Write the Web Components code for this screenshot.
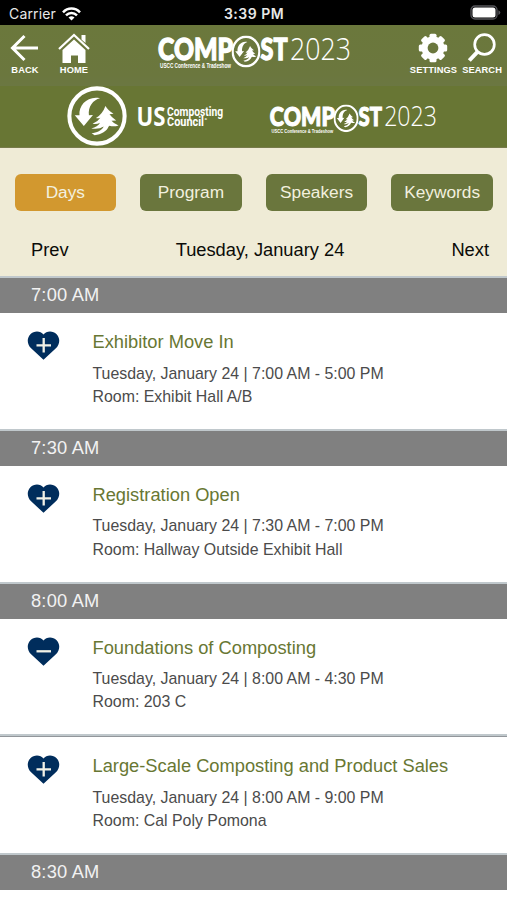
<!DOCTYPE html>
<html lang="en">
<head>
<meta charset="utf-8">
<meta name="viewport" content="width=device-width, initial-scale=1">
<title>Compost 2023</title>
<style>
  body {
    margin: 0;
    background: #fff;
    font-family: "Liberation Sans", Arial, sans-serif;
  }
</style>
</head>
<body>
<schedule-app></schedule-app>

<script>
class StatusBar extends HTMLElement {
  constructor() {
    super();
    this.attachShadow({ mode: 'open' });
  }

  connectedCallback() {
    this.shadowRoot.innerHTML = `
      <style>
        :host {
          display: grid;
          grid-template-columns: 1fr auto 1fr;
          align-items: center;
          height: 25px;
          padding: 0 6px 0 9px;
          box-sizing: border-box;
          background: #000;
          color: #e8e8e8;
          font-family: Inter, sans-serif;
          font-size: 14px;
        }

        .carrier { display: flex; align-items: center; gap: 6px; padding-top: 2px; letter-spacing: 0.15px; }
        .time { font-weight: 600; font-size: 14px; padding-top: 2px; margin-left: -2px; letter-spacing: 0.5px; }
        .battery { justify-self: end; }
        svg { display: block; }
      </style>
      <div class="carrier">
        <span>Carrier</span>
        <svg width="19" height="14" viewBox="0 0 19 14" fill="none" stroke="#fff" stroke-width="2.5">
          <path d="M1 5.4C5.8 .3 13.2 .3 18 5.4M4 8.4C7.2 5.2 11.8 5.2 15 8.4"/>
          <path d="M6.5 10.5Q9.5 8 12.5 10.5L9.5 13.5Z" fill="#fff" stroke="none"/>
        </svg>
      </div>
      <span class="time">3:39 PM</span>
      <svg class="battery" width="31" height="16" viewBox="0 0 31 16">
        <rect x="1" y="1" width="26" height="13" rx="4" fill="none" stroke="#55555a" stroke-width="1.3"/>
        <rect x="2.5" y="2.5" width="23" height="10" rx="2.5" fill="#fff"/>
        <path d="M28.4 5.2Q30.3 6 30.3 7.6T28.4 10Z" fill="#55555a"/>
      </svg>
    `;
  }
}

// Ring with the curved arrow and the pine tree, stretched to fill its box
const emblem = (attrs, ring = 12) => `
  <svg ${attrs} viewBox="0 0 178 178" preserveAspectRatio="none">
    <circle cx="89" cy="89" r="82" fill="none" stroke="#fff" stroke-width="${ring}"/>
    <path fill="#fff" d="M37 87C34 56 62 28 98 36C77 41 62 61 65 87L77 86L50 119L23 87Z"/>
    <path fill="#fff" d="M114 59C120 69 127 75 138 82L126 84Q133 94 146 102L132 103Q139 112 153 117Q139 122 126 118L123 121C119 133 102 144 82 146L73 140C88 139 103 132 109 120Q94 130 72 126Q91 121 98 109Q89 114 76 112Q92 105 99 94Q93 97 86 95Q106 82 114 59Z"/>
  </svg>`;

class CompostLogo extends HTMLElement {
  constructor() {
    super();
    this.attachShadow({ mode: 'open' });
  }

  connectedCallback() {
    this.shadowRoot.innerHTML = `
      <style>
        :host { display: block; width: 194px; }
        .logo { display: block; width: 100%; overflow: visible; }
        text { fill: #fff; font-family: "Open Sans", sans-serif; }
        .bold { font-family: Lato, sans-serif; font-size: 30.5px; font-weight: 900; stroke: #fff; stroke-width: 1.3px; }
        .light { font-size: 31px; font-weight: 300; }
        .tagline { font-family: "Liberation Sans", sans-serif; font-size: 7px; font-weight: 700; }
      </style>
      <svg class="logo" viewBox="0 0 194 36">
        <text class="bold" x="1" y="25" textLength="75" lengthAdjust="spacingAndGlyphs">COMP</text>
        ${emblem('x="74.5" y="0.5" width="29" height="32"', 14)}
        <text class="bold" x="103.5" y="25" textLength="27" lengthAdjust="spacingAndGlyphs">ST</text>
        <text class="light" x="133" y="25" textLength="61" lengthAdjust="spacingAndGlyphs">2023</text>
        <text class="tagline" x="3" y="33.2" textLength="71" lengthAdjust="spacingAndGlyphs">USCC Conference &amp; Tradeshow</text>
      </svg>
    `;
  }
}

class CouncilLogo extends HTMLElement {
  constructor() {
    super();
    this.attachShadow({ mode: 'open' });
  }

  connectedCallback() {
    this.shadowRoot.innerHTML = `
      <style>
        :host { display: block; }
        .logo { display: block; overflow: visible; }
        text { fill: #fff; font-family: "Open Sans", sans-serif; font-weight: 700; }
        .small { font-family: Roboto, sans-serif; font-size: 12px; }
      </style>
      <svg class="logo" width="158" height="60" viewBox="0 0 158 60">
        ${emblem('x="0" y="0" width="60" height="60"')}
        <text x="69.5" y="39.5" font-size="26" textLength="29" lengthAdjust="spacingAndGlyphs">US</text>
        <text class="small" x="100" y="30.4" textLength="56" lengthAdjust="spacingAndGlyphs">Composting</text>
        <text class="small" x="100" y="39.8" textLength="37" lengthAdjust="spacingAndGlyphs">Council</text>
        <text x="137.5" y="36" font-size="6">°</text>
      </svg>
    `;
  }
}

const navIcons = {
  back: '<path d="M14.5 3L2.5 15L14.5 27M3 15H28" fill="none" stroke="#fff" stroke-width="3"/>',
  home: `
    <path d="M16 6.5L27.5 17V30H20V22.5H13V30H4.5V17Z" fill="#fff"/>
    <path d="M1 16L16 2L31 16" fill="none" stroke="#fff" stroke-width="2.2"/>
    <path d="M23.5 2H27.5V10L23.5 6.5Z" fill="#fff"/>`,
  settings: `
    <g fill="#fff">
      <circle cx="15" cy="15" r="11.5"/>
      <rect x="11.5" y=".8" width="7" height="28.4" rx="1.5"/>
      <rect x="11.5" y=".8" width="7" height="28.4" rx="1.5" transform="rotate(45 15 15)"/>
      <rect x="11.5" y=".8" width="7" height="28.4" rx="1.5" transform="rotate(90 15 15)"/>
      <rect x="11.5" y=".8" width="7" height="28.4" rx="1.5" transform="rotate(135 15 15)"/>
    </g>
    <circle cx="15" cy="15" r="5.4" fill="#6b773e"/>`,
  search: `
    <circle cx="17.5" cy="11.5" r="9.8" fill="none" stroke="#fff" stroke-width="2.7"/>
    <path d="M10.5 18.8L2.3 27.5" stroke="#fff" stroke-width="4"/>`
};

class NavButton extends HTMLElement {
  constructor() {
    super();
    this.attachShadow({ mode: 'open' });
  }

  connectedCallback() {
    const icon = this.getAttribute('icon');
    const width = icon === 'home' ? 32 : 30;

    this.shadowRoot.innerHTML = `
      <style>
        :host { display: block; }

        button {
          display: flex;
          flex-direction: column;
          align-items: center;
          width: 100%;
          padding: 0;
          border: none;
          background: none;
          color: #fff;
          font: bold 9.3px/11px "Liberation Sans", sans-serif;
          letter-spacing: 0.1px;
          white-space: nowrap;
          cursor: pointer;
        }

        svg { display: block; margin-bottom: 2px; }
      </style>
      <button>
        <svg width="${width}" height="30" viewBox="0 0 ${width} 30">${navIcons[icon]}</svg>
        <slot></slot>
      </button>
    `;
  }
}

class AppHeader extends HTMLElement {
  constructor() {
    super();
    this.attachShadow({ mode: 'open' });
  }

  connectedCallback() {
    this.shadowRoot.innerHTML = `
      <style>
        :host { display: block; }

        .toolbar {
          display: grid;
          grid-template-columns: 1fr auto 1fr;
          height: 61px;
          box-sizing: border-box;
          padding: 8px 5px 0 10px;
          background: linear-gradient(#6b783c 0, #6b773e 50px, #6b7742);
        }

        .group { display: flex; align-items: flex-start; }
        .left { gap: 18px; }
        .right { justify-content: flex-end; gap: 5px; }
        .toolbar compost-logo { padding-top: 2px; margin: 0 2px 0 -2px; }

        .banner {
          display: flex;
          height: 62px;
          box-sizing: border-box;
          padding: 0 0 0 67px;
          border-bottom: 1px solid #777b4b;
          background: #687634;
        }

        .banner council-logo { margin-right: 44px; }
        .banner compost-logo { width: 168px; padding-top: 18px; }
      </style>
      <div class="toolbar">
        <div class="group left">
          <nav-button icon="back">BACK</nav-button>
          <nav-button icon="home">HOME</nav-button>
        </div>
        <compost-logo></compost-logo>
        <div class="group right">
          <nav-button icon="settings">SETTINGS</nav-button>
          <nav-button icon="search">SEARCH</nav-button>
        </div>
      </div>
      <div class="banner">
        <council-logo></council-logo>
        <compost-logo></compost-logo>
      </div>
    `;
  }
}

class FilterButton extends HTMLElement {
  constructor() {
    super();
    this.attachShadow({ mode: 'open' });
  }

  connectedCallback() {
    this.shadowRoot.innerHTML = `
      <style>
        :host { display: block; flex: 1; }

        button {
          width: 100%;
          height: 37px;
          padding: 0 0 1px;
          border: none;
          border-radius: 6px;
          background: #6a763d;
          color: #f2f0df;
          font: 17.3px "Liberation Sans", sans-serif;
          cursor: pointer;
        }

        :host([active]) button { background: #d2982f; }
      </style>
      <button><slot></slot></button>
    `;
  }
}

class DayPicker extends HTMLElement {
  constructor() {
    super();
    this.attachShadow({ mode: 'open' });
  }

  connectedCallback() {
    this.shadowRoot.innerHTML = `
      <style>
        :host {
          display: block;
          height: 130px;
          box-sizing: border-box;
          padding-top: 26px;
          border-bottom: 2px solid #c0c8cc;
          background: #efebd6;
        }

        .filters { display: flex; gap: 24px; padding: 0 14px 0 14.5px; }

        .days {
          display: flex;
          justify-content: space-between;
          padding: 28px 18px 0 31px;
          font-size: 18.3px;
          line-height: 21px;
          color: #0b0b08;
        }
      </style>
      <div class="filters">
        <filter-button active>Days</filter-button>
        <filter-button>Program</filter-button>
        <filter-button>Speakers</filter-button>
        <filter-button>Keywords</filter-button>
      </div>
      <div class="days">
        <span>Prev</span>
        <span>Tuesday, January 24</span>
        <span>Next</span>
      </div>
    `;
  }
}

class TimeHeading extends HTMLElement {
  constructor() {
    super();
    this.attachShadow({ mode: 'open' });
  }

  connectedCallback() {
    this.shadowRoot.innerHTML = `
      <style>
        :host {
          display: block;
          height: 35.4px;
          box-sizing: border-box;
          padding-left: 31px;
          background: #808080;
          color: #f2f2f2;
          font-size: 18.3px;
          letter-spacing: 0.2px;
          line-height: 34px;
        }
      </style>
      <slot></slot>
    `;
  }
}

class SessionRow extends HTMLElement {
  constructor() {
    super();
    this.attachShadow({ mode: 'open' });
  }

  connectedCallback() {
    const saved = this.hasAttribute('saved');

    this.shadowRoot.innerHTML = `
      <style>
        :host {
          display: flex;
          height: 117.4px;
          box-sizing: border-box;
          padding: 18px 0 0 27px;
          border-bottom: 2px solid #c0c8cc;
          background: #fff;
        }

        :host([joined]) { height: 118.4px; border-top: 1px solid #92969b; }

        svg { flex: none; margin-right: 32.5px; }
        .title { margin-top: -0.4px; font-size: 18.3px; line-height: 21px; color: #687733; }
        .details { margin-top: 9.6px; font-size: 15.9px; line-height: 23.3px; color: #4b4b4b; }
      </style>
      <svg width="33" height="30" viewBox="0 0 33 30">
        <path fill="#002d5c" d="M16.5 3.6C19.5-.6 26-.6 29.6 3.2C33.6 7.5 32.8 13.5 28.9 17.3L16.5 28.8L4.1 17.3C.2 13.5-.6 7.5 3.4 3.2C7-.6 13.5-.6 16.5 3.6Z"/>
        <path stroke="#f1f1e6" stroke-width="2.3" d="M9.5 14.3H24${saved ? '' : 'M16.7 7.1V21.6'}"/>
      </svg>
      <div>
        <div class="title"><slot name="title"></slot></div>
        <div class="details">
          <div><slot name="when"></slot></div>
          <div><slot name="room"></slot></div>
        </div>
      </div>
    `;
  }
}

class ScheduleApp extends HTMLElement {
  constructor() {
    super();
    this.attachShadow({ mode: 'open' });
  }

  connectedCallback() {
    this.shadowRoot.innerHTML = `
      <style>
        :host { display: block; height: 900px; overflow: hidden; background: #fff; }
      </style>
      <status-bar></status-bar>
      <app-header></app-header>
      <day-picker></day-picker>
      <time-heading>7:00 AM</time-heading>
      <session-row>
        <span slot="title">Exhibitor Move In</span>
        <span slot="when">Tuesday, January 24 | 7:00 AM - 5:00 PM</span>
        <span slot="room">Room: Exhibit Hall A/B</span>
      </session-row>
      <time-heading>7:30 AM</time-heading>
      <session-row>
        <span slot="title">Registration Open</span>
        <span slot="when">Tuesday, January 24 | 7:30 AM - 7:00 PM</span>
        <span slot="room">Room: Hallway Outside Exhibit Hall</span>
      </session-row>
      <time-heading>8:00 AM</time-heading>
      <session-row saved>
        <span slot="title">Foundations of Composting</span>
        <span slot="when">Tuesday, January 24 | 8:00 AM - 4:30 PM</span>
        <span slot="room">Room: 203 C</span>
      </session-row>
      <session-row joined>
        <span slot="title">Large-Scale Composting and Product Sales</span>
        <span slot="when">Tuesday, January 24 | 8:00 AM - 9:00 PM</span>
        <span slot="room">Room: Cal Poly Pomona</span>
      </session-row>
      <time-heading>8:30 AM</time-heading>
    `;
  }
}

customElements.define('status-bar', StatusBar);
customElements.define('compost-logo', CompostLogo);
customElements.define('council-logo', CouncilLogo);
customElements.define('nav-button', NavButton);
customElements.define('app-header', AppHeader);
customElements.define('filter-button', FilterButton);
customElements.define('day-picker', DayPicker);
customElements.define('time-heading', TimeHeading);
customElements.define('session-row', SessionRow);
customElements.define('schedule-app', ScheduleApp);
</script>
</body>
</html>
